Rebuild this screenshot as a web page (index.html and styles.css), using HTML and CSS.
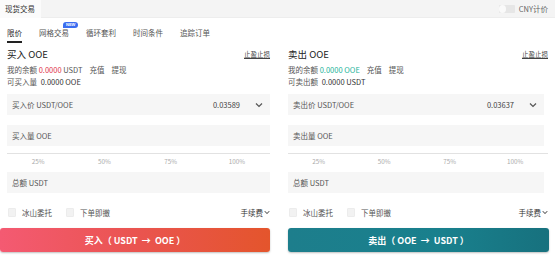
FILE: index.html
```html
<!DOCTYPE html>
<html lang="zh">
<head>
<meta charset="utf-8">
<link rel="stylesheet" href="styles.css">
</head>
<body>
<div class="topbar">
  <div class="title">现货交易</div>
  <div class="cny"><span class="toggle"><span class="knob"></span></span><span>CNY计价</span></div>
</div>
<div class="tabs">
  <div class="tab active">限价</div>
  <div class="tab">网格交易<span class="badge">NEW</span></div>
  <div class="tab">循环套利</div>
  <div class="tab">时间条件</div>
  <div class="tab">追踪订单</div>
</div>
<div class="panels">
  <div class="panel buy">
    <div class="head"><span class="ptitle">买入 OOE</span><span class="tpsl">止盈止损</span></div>
    <div class="info">我的余额 <span class="red">0.0000</span> <span class="unit">USDT</span><span class="link">充值</span><span class="link">提现</span></div>
    <div class="info">可买入量 <span class="dark">0.0000 OOE</span></div>
    <div class="field price"><span>买入价 USDT/OOE</span><span class="val">0.03589</span><span class="chev"><svg width="8" height="6" viewBox="0 0 8 6"><path d="M1 1.5 L4 4.5 L7 1.5" fill="none" stroke="#555" stroke-width="1.2"/></svg></span></div>
    <div class="field"><span>买入量 OOE</span></div>
    <div class="slider"><div class="line"></div><div class="labels"><span>25%</span><span>50%</span><span>75%</span><span>100%</span></div></div>
    <div class="field"><span>总额 USDT</span></div>
    <div class="opts">
      <span class="box"></span><span class="olabel">冰山委托</span>
      <span class="box"></span><span class="olabel">下单即撤</span>
      <span class="fee">手续费<svg width="6" height="5" viewBox="0 0 6 5"><path d="M0.8 1.2 L3 3.6 L5.2 1.2" fill="none" stroke="#333" stroke-width="1"/></svg></span>
    </div>
    <button class="btn buybtn">买入（ USDT &nbsp;→&nbsp; OOE ）</button>
  </div>
  <div class="panel sell">
    <div class="head"><span class="ptitle">卖出 OOE</span><span class="tpsl">止盈止损</span></div>
    <div class="info">我的余额 <span class="green">0.0000 OOE</span><span class="link">充值</span><span class="link">提现</span></div>
    <div class="info">可卖出额 <span class="dark">0.0000 USDT</span></div>
    <div class="field price"><span>卖出价 USDT/OOE</span><span class="val">0.03637</span><span class="chev"><svg width="8" height="6" viewBox="0 0 8 6"><path d="M1 1.5 L4 4.5 L7 1.5" fill="none" stroke="#555" stroke-width="1.2"/></svg></span></div>
    <div class="field"><span>卖出量 OOE</span></div>
    <div class="slider"><div class="line"></div><div class="labels"><span>25%</span><span>50%</span><span>75%</span><span>100%</span></div></div>
    <div class="field"><span>总额 USDT</span></div>
    <div class="opts">
      <span class="box"></span><span class="olabel">冰山委托</span>
      <span class="box"></span><span class="olabel">下单即撤</span>
      <span class="fee">手续费<svg width="6" height="5" viewBox="0 0 6 5"><path d="M0.8 1.2 L3 3.6 L5.2 1.2" fill="none" stroke="#333" stroke-width="1"/></svg></span>
    </div>
    <button class="btn sellbtn">卖出（ OOE &nbsp;→&nbsp; USDT ）</button>
  </div>
</div>
</body>
</html>
```
FILE: styles.css
```css
* { box-sizing: border-box; }
html, body { margin: 0; padding: 0; background: #fff; }
body {
  width: 555px; height: 259px; overflow: hidden;
  font-family: "Noto Sans CJK SC", "Noto Sans", sans-serif;
  color: #333; font-size: 7.5px;
}
.topbar {
  height: 18px; background: #f4f4f4; display: flex; align-items: center;
  justify-content: space-between; border-bottom: 1px solid #ededed;
}
.title {
  height: 18px; background: #fbfbfb; padding: 0 6px 0 5px; display: flex; align-items: center;
  font-size: 7.5px; color: #333;
}
.cny { display: flex; align-items: center; gap: 4px; padding-right: 7px; color: #666; font-size: 7.5px; }
.toggle { width: 16px; height: 8px; background: #e6e6e6; border-radius: 1px; position: relative; display: inline-block; }
.knob { position: absolute; left: 0; top: 0; width: 7px; height: 8px; background: #fafafa; border-radius: 50%; }
.tabs { display: flex; gap: 17px; padding: 0 7px; height: 26px; align-items: center; padding-top: 3px; }
.tab { position: relative; color: #555; line-height: 12px; }
.tab.active { color: #222; }
.tab.active::after {
  content: ""; position: absolute; left: 0; right: 0; bottom: -4px; height: 1.5px; background: #222;
}
.badge {
  position: absolute; left: 24px; top: -5px; background: #3a6df0; color: #fff; font-size: 4px;
  line-height: 6px; padding: 0 3px; border-radius: 3px 3px 3px 0; font-family: "Liberation Sans", sans-serif; font-weight: bold;
}
.panels { display: flex; padding-left: 7px; gap: 18px; }
.panel { width: 263px; display: flex; flex-direction: column; }
.panel.sell { width: 260px; }
.head { display: flex; justify-content: space-between; align-items: center; height: 16px; margin-top: 2px; }
.ptitle { font-size: 9.5px; color: #222; }
.tpsl { font-size: 6.5px; color: #444; text-decoration: underline; }
.info { height: 12px; line-height: 12px; color: #555; font-size: 7.5px; }
.head + .info { margin-top: 2px; }
.red { color: #e0344a; }
.green { color: #22b39a; }
.unit { color: #555; }
.dark { color: #333; margin-left: 2px; }
.link { margin-left: 7px; color: #555; }
.field {
  height: 21px; background: #f6f6f6; display: flex; align-items: center; padding: 0 5px;
  color: #555; font-size: 7.5px;
}
.sell .field { margin-right: 4px; }
.field.price { margin-top: 6px; margin-bottom: 10px; }
.field .val { margin-left: auto; color: #444; }
.field .chev { margin-left: 15px; margin-right: 2px; display: flex; }
.slider { height: 26px; padding-top: 7px; }
.line { height: 1px; background: #e2e2e2; }
.labels { display: grid; grid-template-columns: repeat(4, 1fr); margin-left: -2px; margin-top: 4px; }
.labels span { text-align: center; color: #aaa; font-size: 6.3px; line-height: 8px; }
.opts { display: flex; align-items: center; height: 20px; margin-top: 9px; }
.box { width: 8px; height: 9px; background: #f2f2f2; border: 1px solid #ececec; border-radius: 1px; margin-left: 1px; }
.olabel { margin-left: 6px; margin-right: 13px; color: #555; }
.fee { margin-left: auto; display: flex; align-items: center; gap: 1px; color: #333; }
.btn {
  border: none; height: 24px; margin-top: 6px; color: #fff; font-weight: bold; font-size: 9px;
  font-family: "Noto Sans CJK SC", "Noto Sans", sans-serif; border-radius: 3px;
  box-shadow: 0 1px 2px rgba(0,0,0,0.25); padding: 0;
}
.buybtn { background: linear-gradient(90deg, #f45a72 0%, #ea5450 50%, #e4552c 100%); margin-left: -7px; width: 270px; }
.sellbtn { background: linear-gradient(90deg, #1d7e8c 0%, #19808d 60%, #17717e 100%); width: 261px; }
```
